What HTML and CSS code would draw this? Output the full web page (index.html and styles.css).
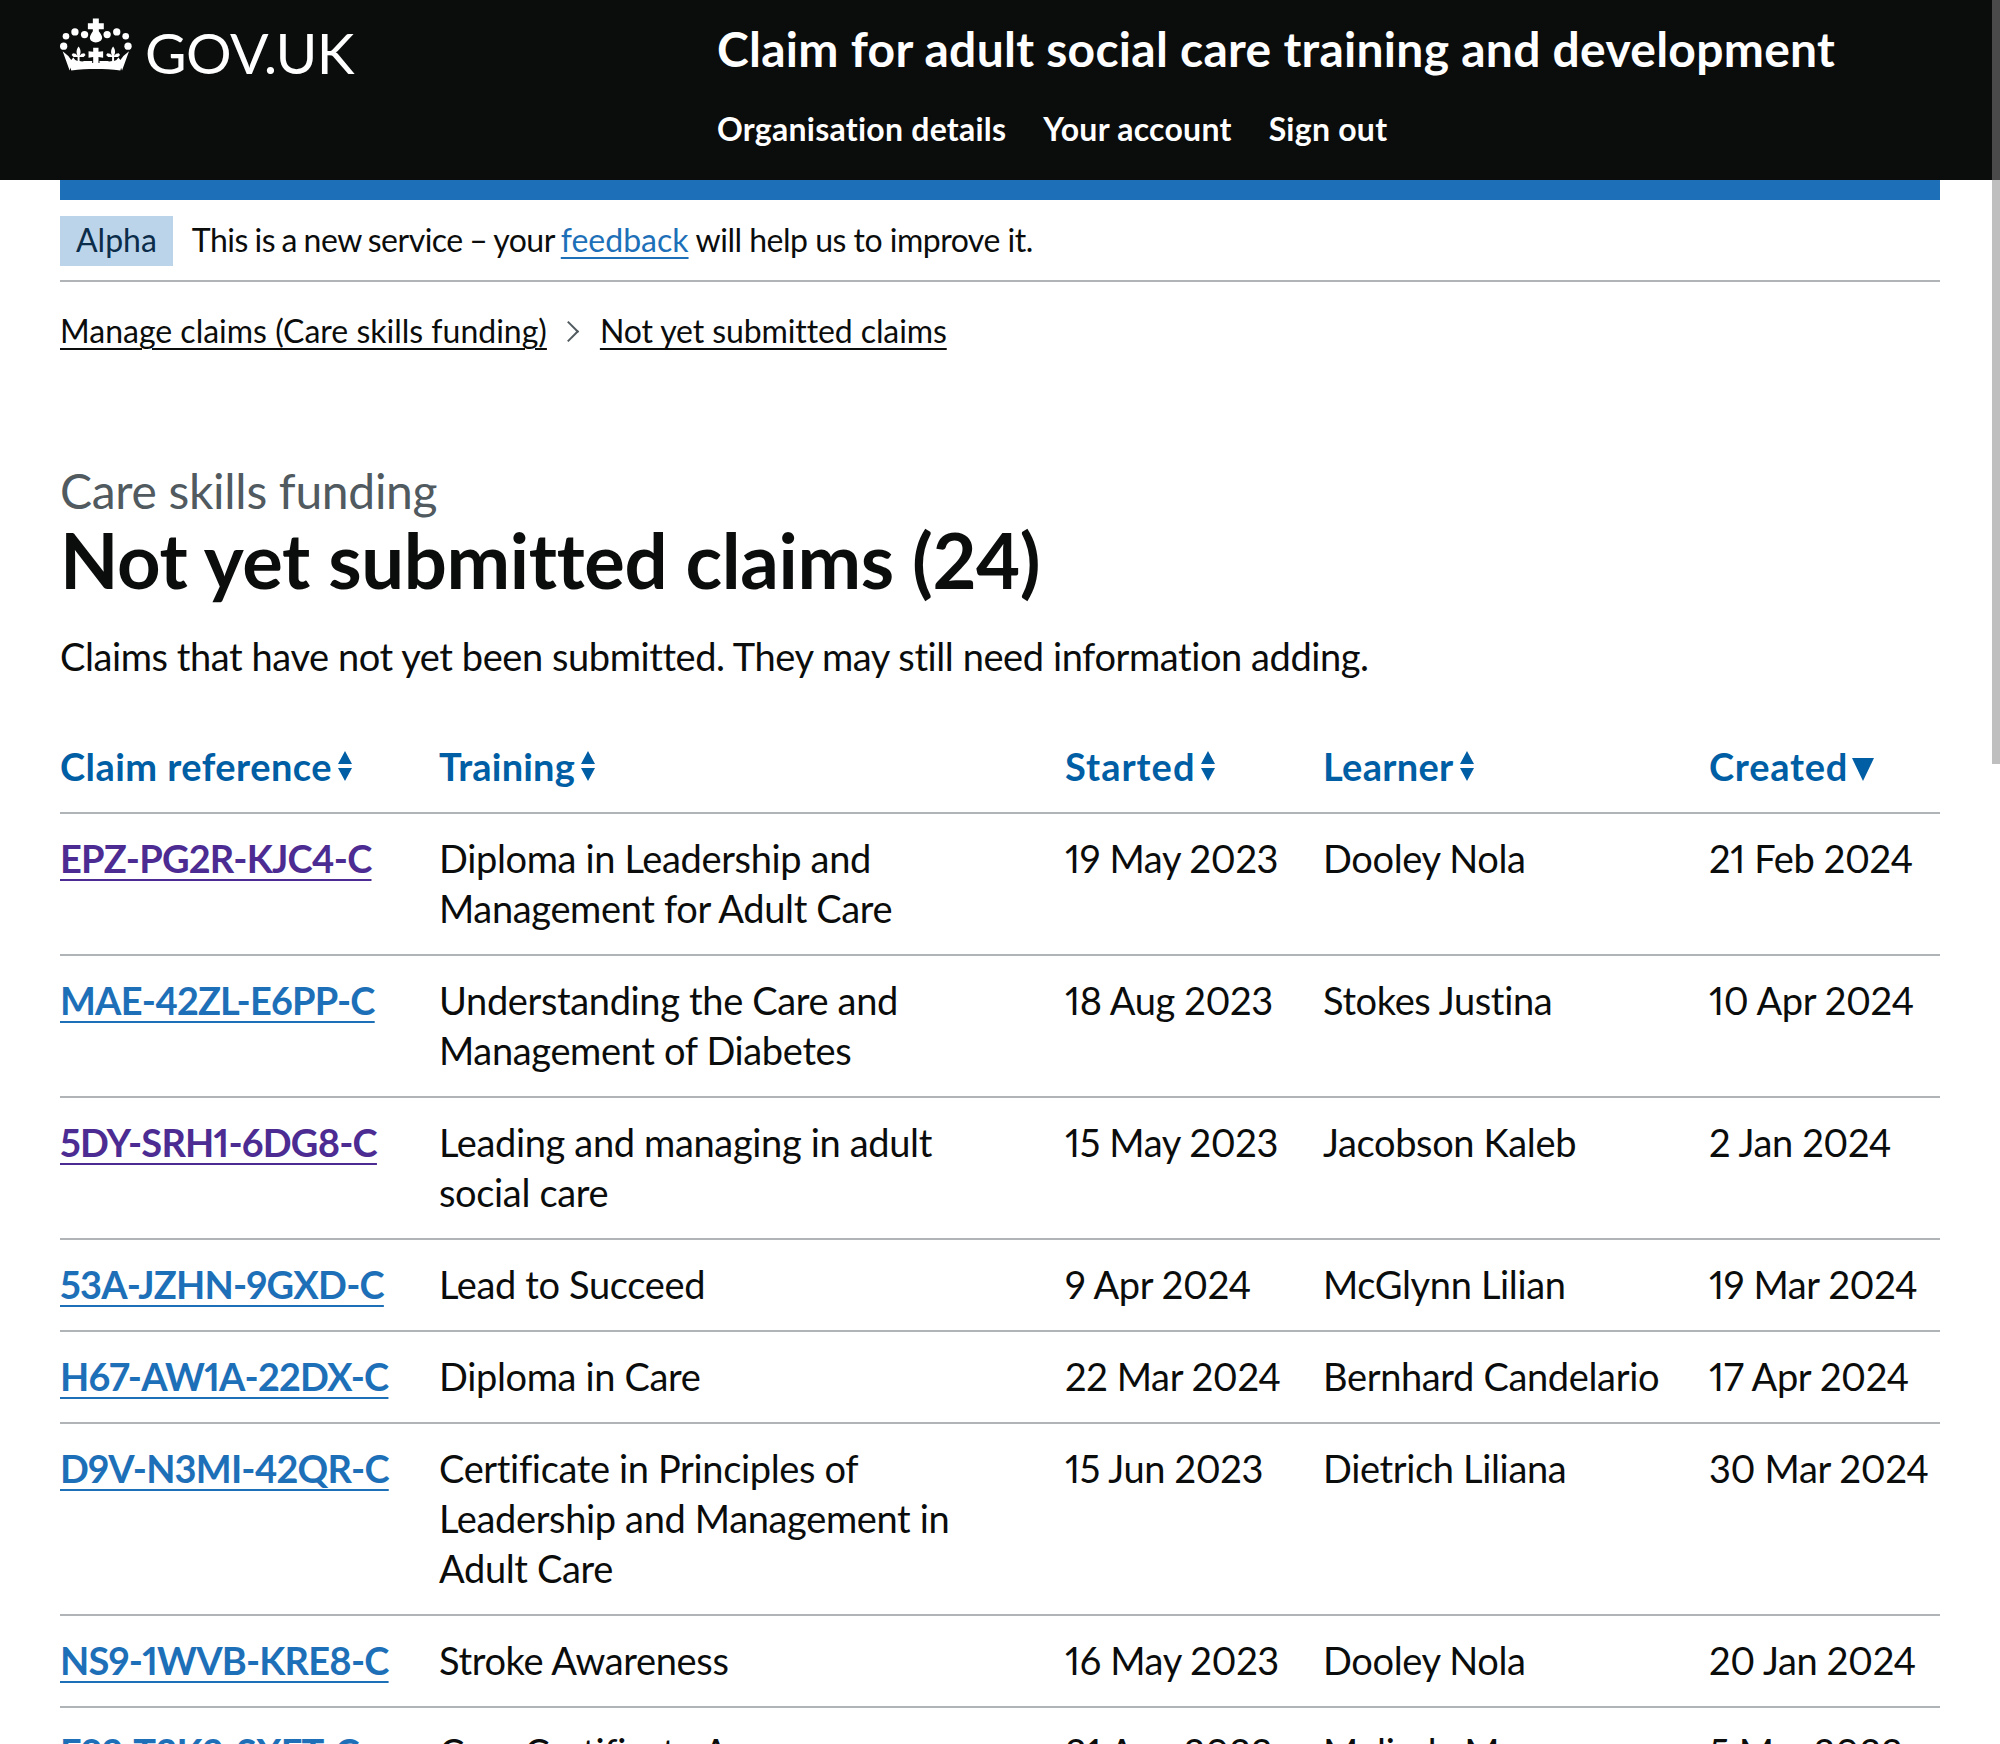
FILE: index.html
```html
<!DOCTYPE html>
<html lang="en">
<head>
  <meta charset="UTF-8">
  <title>Not yet submitted claims</title>
  <link rel="stylesheet" href="styles.css">
</head>
<body>
  <header class="header">
    <div class="header-logo">
      <svg class="crown" viewBox="60 45 220 170" aria-hidden="true">
        <defs>
          <g id="crown-half">
            <circle cx="78" cy="105" r="10"/>
            <circle cx="105" cy="92" r="11"/>
            <circle cx="134" cy="100" r="11"/>
            <circle cx="71" cy="135" r="11"/>
            <path d="M68 150l17 15 9 12 6-8 6 8 7 3v-12h-12l-6-6 4-6 8 2 6 6c-4-9-5-17 3-28 8 11 7 19 3 28l6-6 8-2 4 6-6 6h-12v12l8 1 6-1h24v20H92l-3 8z"/>
          </g>
        </defs>
        <g fill="#fff">
          <use href="#crown-half"/>
          <use href="#crown-half" transform="translate(336 0) scale(-1 1)"/>
          <path d="M159 52h18v14h15v18h-15v6c7 9 10 14 10 20 0 8-9 14-19 14s-18-6-18-14c0-6 3-11 9-20v-6h-15V66h15z"/>
          <path d="M160 140h16v12l14-2v20l-14-2v20h-16v-20l-14 2v-20l14 2z"/>
          <path d="M88 186h160l-6 22c-50-6-98-6-148 0z"/>
        </g>
      </svg>
      <a class="logo-text" href="#">GOV.UK</a>
    </div>
    <div class="header-content">
      <a class="service-name" href="#">Claim for adult social care training and development</a>
      <nav class="header-nav">
        <a href="#">Organisation details</a>
        <a href="#">Your account</a>
        <a href="#">Sign out</a>
      </nav>
    </div>
  </header>

  <div class="container">
    <div class="blue-bar"></div>

    <div class="phase-banner">
      <strong class="tag">Alpha</strong>
      <span class="phase-text"><span class="phase-lead">This is a new service – your </span><a class="link" href="#">feedback</a> will help us to improve it.</span>
    </div>

    <nav class="breadcrumbs">
      <a href="#">Manage claims (Care skills funding)</a>
      <span class="chevron"></span>
      <a href="#">Not yet submitted claims</a>
    </nav>

    <main class="main">
      <span class="caption">Care skills funding</span>
      <h1>Not yet submitted claims (24)</h1>
      <p class="intro">Claims that have not yet been submitted. They may still need information adding.</p>

      <table class="claims">
        <colgroup>
          <col class="col-ref"><col class="col-training"><col class="col-started"><col class="col-learner"><col class="col-created">
        </colgroup>
        <thead>
          <tr>
            <th><a href="#">Claim reference<svg class="sort" viewBox="0 0 14 30"><path d="M7 0l7 13H0zM7 30L0 17h14z"/></svg></a></th>
            <th><a href="#">Training<svg class="sort" viewBox="0 0 14 30"><path d="M7 0l7 13H0zM7 30L0 17h14z"/></svg></a></th>
            <th><a href="#">Started<svg class="sort" viewBox="0 0 14 30"><path d="M7 0l7 13H0zM7 30L0 17h14z"/></svg></a></th>
            <th><a href="#">Learner<svg class="sort" viewBox="0 0 14 30"><path d="M7 0l7 13H0zM7 30L0 17h14z"/></svg></a></th>
            <th><a href="#">Created<svg class="sort-down" viewBox="0 0 22 23"><path d="M0 0h22L11 23z"/></svg></a></th>
          </tr>
        </thead>
        <tbody>
          <tr>
            <td><a class="ref visited" href="#">EPZ-PG2R-KJC4-C</a></td>
            <td>Diploma in Leadership and Management for Adult Care</td>
            <td class="date">19 May 2023</td><td>Dooley Nola</td><td class="date">21 Feb 2024</td>
          </tr>
          <tr>
            <td><a class="ref" href="#">MAE-42ZL-E6PP-C</a></td>
            <td>Understanding the Care and Management of Diabetes</td>
            <td class="date">18 Aug 2023</td><td>Stokes Justina</td><td class="date">10 Apr 2024</td>
          </tr>
          <tr>
            <td><a class="ref visited" href="#">5DY-SRH1-6DG8-C</a></td>
            <td>Leading and managing in adult social care</td>
            <td class="date">15 May 2023</td><td>Jacobson Kaleb</td><td class="date">2 Jan 2024</td>
          </tr>
          <tr>
            <td><a class="ref" href="#">53A-JZHN-9GXD-C</a></td>
            <td>Lead to Succeed</td>
            <td class="date">9 Apr 2024</td><td>McGlynn Lilian</td><td class="date">19 Mar 2024</td>
          </tr>
          <tr>
            <td><a class="ref" href="#">H67-AW1A-22DX-C</a></td>
            <td>Diploma in Care</td>
            <td class="date">22 Mar 2024</td><td>Bernhard Candelario</td><td class="date">17 Apr 2024</td>
          </tr>
          <tr>
            <td><a class="ref" href="#">D9V-N3MI-42QR-C</a></td>
            <td>Certificate in Principles of Leadership and Management in Adult Care</td>
            <td class="date">15 Jun 2023</td><td>Dietrich Liliana</td><td class="date">30 Mar 2024</td>
          </tr>
          <tr>
            <td><a class="ref" href="#">NS9-1WVB-KRE8-C</a></td>
            <td>Stroke Awareness</td>
            <td class="date">16 May 2023</td><td>Dooley Nola</td><td class="date">20 Jan 2024</td>
          </tr>
          <tr>
            <td><a class="ref" href="#">E92-T3K2-SXFT-C</a></td>
            <td>Care Certificate Awareness</td>
            <td class="date">21 Aug 2023</td><td>Melinda Moen</td><td class="date">5 Mar 2023</td>
          </tr>
        </tbody>
      </table>
    </main>
  </div>

  <div class="scrollbar"></div>
</body>
</html>
```

FILE: styles.css
```css
html, body {
  margin: 0;
  height: 1744px;
  overflow: hidden;
}
body {
  background: #fff;
  color: #0b0c0c;
  font-family: "Lato", "Liberation Sans", sans-serif;
  font-size: 38px;
  line-height: 50px;
}
a {
  color: inherit;
}

.header {
  display: flex;
  height: 180px;
  box-sizing: border-box;
  padding-left: 60px;
  background: #0b0c0c;
  color: #fff;
}
.header a {
  color: #fff;
  text-decoration: none;
}
.header-logo {
  display: flex;
  flex: 0 0 657px;
  align-items: flex-start;
  padding-top: 16px;
  box-sizing: border-box;
}
.crown {
  width: 73px;
  height: 57px;
  margin-right: 12px;
}
.logo-text {
  font-size: 57px;
  font-weight: 400;
  letter-spacing: -0.6px;
  line-height: 72px;
}
.header-content {
  padding-top: 19px;
}
.service-name {
  display: block;
  font-size: 48px;
  font-weight: 700;
  letter-spacing: 0.27px;
  line-height: 60px;
}
.header-nav {
  display: flex;
  gap: 37px;
  margin-top: 30px;
  font-size: 32px;
  font-weight: 700;
  letter-spacing: 0.25px;
  line-height: 40px;
}

.container {
  margin: 0 60px;
}
.blue-bar {
  height: 20px;
  background: #1d70b8;
}

.phase-banner {
  display: flex;
  align-items: center;
  gap: 19px;
  padding: 16px 0 14px;
  border-bottom: 2px solid #b1b4b6;
  font-size: 32px;
  letter-spacing: -0.5px;
  line-height: 48px;
}
.tag {
  padding: 0 16px 2px;
  background: #bbd4ea;
  color: #0c2d4a;
  font-weight: 400;
  letter-spacing: 0;
}
.phase-text {
  padding-bottom: 2px;
}
.phase-lead {
  word-spacing: -1.1px;
}
.link {
  color: #1d70b8;
  letter-spacing: 0;
  text-decoration-thickness: 2px;
  text-underline-offset: 5px;
}

.breadcrumbs {
  display: flex;
  align-items: center;
  margin-top: 29px;
  margin-bottom: 1px;
  font-size: 32px;
  line-height: 40px;
}
.breadcrumbs a {
  text-decoration-thickness: 2px;
  text-underline-offset: 5px;
}
.breadcrumbs a:last-child {
  letter-spacing: -0.1px;
}
.chevron {
  width: 13px;
  height: 13px;
  margin: 0 24px 0 14px;
  border-top: 2px solid #505a5f;
  border-right: 2px solid #505a5f;
  transform: rotate(45deg);
}

.main {
  padding-top: 109px;
}
.caption {
  display: block;
  color: #505a5f;
  font-size: 48px;
  letter-spacing: -0.3px;
  line-height: 60px;
}
h1 {
  margin: -1px 0 32px;
  font-size: 76px;
  font-weight: 700;
  letter-spacing: -0.35px;
  line-height: 79px;
}
.intro {
  margin: 0 0 41px;
  letter-spacing: -0.42px;
}

.claims {
  width: 100%;
  table-layout: fixed;
  border-collapse: collapse;
  letter-spacing: -0.35px;
}
.col-ref { width: 379px; }
.col-training { width: 626px; }
.col-started { width: 258px; }
.col-learner { width: 386px; }
.col-created { width: 231px; }
.claims th,
.claims td {
  padding: 19px 20px 21px 0;
  border-bottom: 2px solid #b1b4b6;
  text-align: left;
  vertical-align: top;
}
.claims th:last-child,
.claims td:last-child {
  padding-right: 0;
}
.claims td:nth-child(2) {
  padding-right: 60px;
}
.claims th a {
  color: #005ea5;
  font-weight: 700;
  letter-spacing: 0.45px;
  text-decoration: none;
  white-space: nowrap;
}
.claims th:nth-child(2) a { letter-spacing: 0.2px; }
.claims th:nth-child(3) a { letter-spacing: 1px; }
.claims th:nth-child(4) a { letter-spacing: 0.3px; }
.claims th:nth-child(5) a { letter-spacing: 0.75px; }
.claims td:first-child {
  white-space: nowrap;
}
.sort {
  width: 14px;
  height: 30px;
  margin-left: 6px;
  fill: #005ea5;
}
.sort-down {
  width: 22px;
  height: 23px;
  margin-left: 4px;
  fill: #005ea5;
}
.date {
  font-variant-numeric: proportional-nums;
  white-space: nowrap;
}
.ref {
  color: #1d70b8;
  font-variant-numeric: proportional-nums;
  font-weight: 700;
  letter-spacing: -0.8px;
  text-decoration-thickness: 2px;
  text-underline-offset: 6px;
}
.ref.visited {
  color: #4c2c92;
}

.scrollbar {
  position: fixed;
  top: 0;
  right: 0;
  width: 8px;
  height: 764px;
  background: rgba(133, 133, 133, 0.52);
}
```
